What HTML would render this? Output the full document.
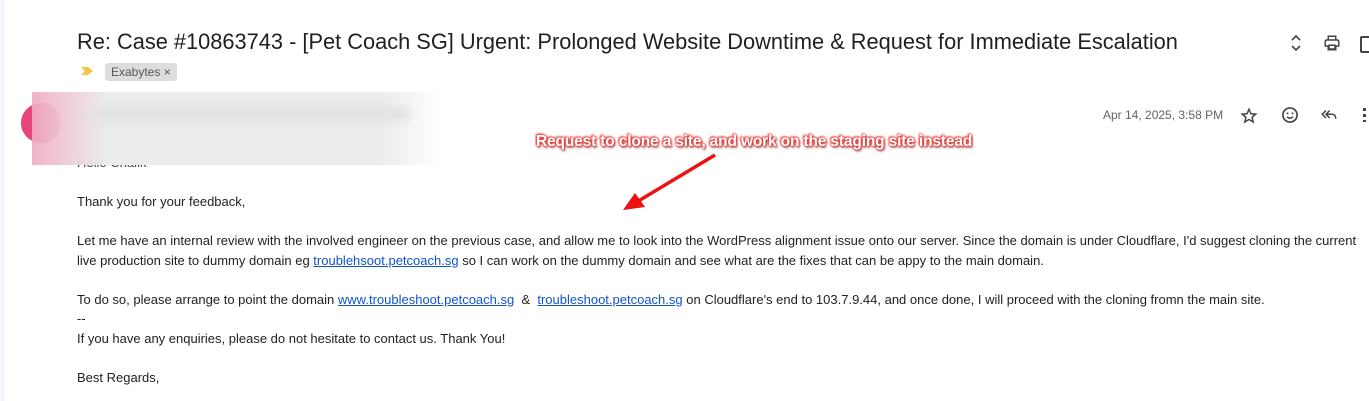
<!DOCTYPE html>
<html><head><meta charset="utf-8"><style>
body{margin:0;width:1369px;height:401px;background:#fff;position:relative;overflow:hidden;font-family:"Liberation Sans",Arial,sans-serif;}
.a{position:absolute}
.t{left:77px;top:29px;font-size:21.8px;color:#1f1f1f;white-space:nowrap}
.tag{left:105px;top:63px;background:#ddd;border-radius:3px;font-size:12px;color:#555;padding:1px 6px;height:16px;line-height:16px}
.b{left:77px;font-size:13px;color:#222;white-space:nowrap}
a{color:#1155cc;text-decoration:underline}
</style></head><body>
<div class="a" style="left:0;top:0;width:5px;height:401px;background:#f4f6fb"></div>
<div class="a t">Re: Case #10863743 - [Pet Coach SG] Urgent: Prolonged Website Downtime &amp; Request for Immediate Escalation</div>
<svg class="a" style="left:80px;top:66px" width="14" height="10"><path d="M1 1h7l5 4-5 4H1l4-4z" fill="#f6c343"/></svg>
<div class="a tag">Exabytes ×</div>
<div class="a b" style="top:155px;color:#444">Hello Chalik</div>
<div class="a" style="left:21px;top:103px;width:40px;height:40px;border-radius:50%;background:#e8457c"></div>
<div class="a" style="left:32px;top:92px;width:410px;height:73px;background:linear-gradient(90deg,rgba(240,170,195,.9),#ececec 18%,#ececec 85%,#fff)"></div>
<div class="a" style="left:90px;top:108px;width:320px;height:12px;background:#e0e0e0;filter:blur(5px)"></div>
<div class="a" style="left:1103px;top:108px;font-size:12px;color:#5f6368">Apr 14, 2025, 3:58 PM</div>
<svg class="a" style="left:1240px;top:107px" width="18" height="18" viewBox="0 0 24 24"><path d="M12 3l2.6 6 6.4.5-4.9 4.2 1.5 6.3L12 16.7 6.4 20l1.5-6.3L3 9.5l6.4-.5z" fill="none" stroke="#444" stroke-width="2"/></svg>
<svg class="a" style="left:1280px;top:105px" width="20" height="20" viewBox="0 0 24 24"><circle cx="12" cy="12" r="8.5" fill="none" stroke="#444" stroke-width="2"/><circle cx="9" cy="10" r="1.2" fill="#444"/><circle cx="15" cy="10" r="1.2" fill="#444"/><path d="M8.5 14c1.8 2.4 5.2 2.4 7 0" fill="none" stroke="#444" stroke-width="1.8"/></svg>
<svg class="a" style="left:1319px;top:106px" width="20" height="18" viewBox="0 0 24 24"><path d="M8 6L3 11l5 5M13 6l-5 5 5 5M8 11h8c3 0 5 2 5 6" fill="none" stroke="#444" stroke-width="2"/></svg>
<div class="a" style="left:1363px;top:108px;width:3px;height:14px;background:repeating-linear-gradient(#444 0 3px,transparent 3px 6px)"></div>
<svg class="a" style="left:1289px;top:33px" width="14" height="20" viewBox="0 0 14 20"><path d="M3 7l4-4 4 4M3 13l4 4 4-4" fill="none" stroke="#444" stroke-width="1.6"/></svg>
<svg class="a" style="left:1323px;top:34px" width="18" height="18" viewBox="0 0 24 24"><path d="M7 8V3h10v5M5 8h14a2 2 0 012 2v6h-4v5H7v-5H3v-6a2 2 0 012-2zM8 15h8v5H8z" fill="none" stroke="#444" stroke-width="2"/></svg>
<div class="a" style="left:1360px;top:36px;width:12px;height:13px;border:2px solid #444;border-radius:2px"></div>
<div class="a b" style="top:194px">Thank you for your feedback,</div>
<div class="a b" style="top:233px">Let me have an internal review with the involved engineer on the previous case, and allow me to look into the WordPress alignment issue onto our server. Since the domain is under Cloudflare, I'd suggest cloning the current</div>
<div class="a b" style="top:253px">live production site to dummy domain eg <a>troublehsoot.petcoach.sg</a> so I can work on the dummy domain and see what are the fixes that can be appy to the main domain.</div>
<div class="a b" style="top:292px">To do so, please arrange to point the domain <a>www.troubleshoot.petcoach.sg</a> &nbsp;&amp;&nbsp; <a>troubleshoot.petcoach.sg</a> on Cloudflare's end to 103.7.9.44, and once done, I will proceed with the cloning fromn the main site.</div>
<div class="a b" style="top:311px">--</div>
<div class="a b" style="top:331px">If you have any enquiries, please do not hesitate to contact us. Thank You!</div>
<div class="a b" style="top:370px">Best Regards,</div>
<div class="a" style="left:536px;top:133px;font-size:15.5px;font-weight:bold;color:#fff;white-space:nowrap;letter-spacing:-0.15px;text-shadow:0 0 2px #e53935,0 0 2px #e53935,1px 1px 2px #e53935,-1px -1px 2px #e53935,1px 2px 2px #999">Request to clone a site, and work on the staging site instead</div>
<svg class="a" style="left:615px;top:150px" width="110" height="65"><path d="M100 5L20 53" stroke="#ee1111" stroke-width="3.5"/><path d="M8 60l12-17 10 14z" fill="#ee1111"/></svg>
</body></html>
